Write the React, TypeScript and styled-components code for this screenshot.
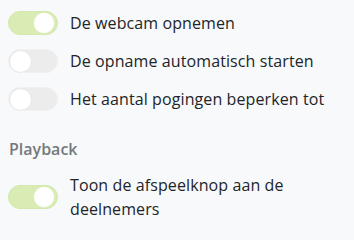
import React from "react";
import styled, { createGlobalStyle } from "styled-components";

const Global = createGlobalStyle`
  html, body {
    margin: 0;
    padding: 0;
    background: #f8f9fa;
  }
  body {
    font-family: "Open Sans", "Liberation Sans", sans-serif;
    color: #212529;
  }
`;

const Panel = styled.div`
  display: flex;
  flex-direction: column;
  padding: 11px 8px 0 8px;
`;

const Group = styled.div`
  display: flex;
  flex-direction: column;
  gap: 14px;
`;

const Row = styled.label`
  display: flex;
  align-items: center;
  gap: 12px;
`;

const Track = styled.span<{ $on: boolean }>`
  position: relative;
  flex: 0 0 auto;
  box-sizing: border-box;
  width: 50px;
  height: 24px;
  border-radius: 12px;
  background: ${(p) => (p.$on ? "#d8ecb4" : "#ececec")};
  border: 1px solid ${(p) => (p.$on ? "#d3e8aa" : "#f1f1f1")};
`;

const Knob = styled.span<{ $on: boolean }>`
  position: absolute;
  top: 1px;
  ${(p) => (p.$on ? "right: 3px;" : "left: 1px;")}
  width: ${(p) => (p.$on ? "20px" : "21px")};
  height: ${(p) => (p.$on ? "20px" : "21px")};
  border-radius: 50%;
  background: #ffffff;
  box-shadow: 0 0 0 0.5px ${(p) => (p.$on ? "#e8f3d3" : "#e4e4e4")};
`;

const Label = styled.span`
  font-size: 16px;
  line-height: 24px;
  letter-spacing: 0.1px;
  color: #212529;
`;

const Heading = styled.div`
  margin: 28px 0 14px 1px;
  font-size: 16px;
  line-height: 20px;
  font-weight: 600;
  color: #74797e;
`;

const Toggle = ({ on }: { on: boolean }) => (
  <Track $on={on}>
    <Knob $on={on} />
  </Track>
);

const items = [
  { on: true, text: "De webcam opnemen" },
  { on: false, text: "De opname automatisch starten" },
  { on: false, text: "Het aantal pogingen beperken tot" },
];

export default function App() {
  return (
    <>
      <Global />
      <Panel>
        <Group>
          {items.map((it) => (
            <Row key={it.text}>
              <Toggle on={it.on} />
              <Label>{it.text}</Label>
            </Row>
          ))}
        </Group>
        <Heading>Playback</Heading>
        <Group>
          <Row>
            <Toggle on={true} />
            <Label>Toon de afspeelknop aan de deelnemers</Label>
          </Row>
        </Group>
      </Panel>
    </>
  );
}
